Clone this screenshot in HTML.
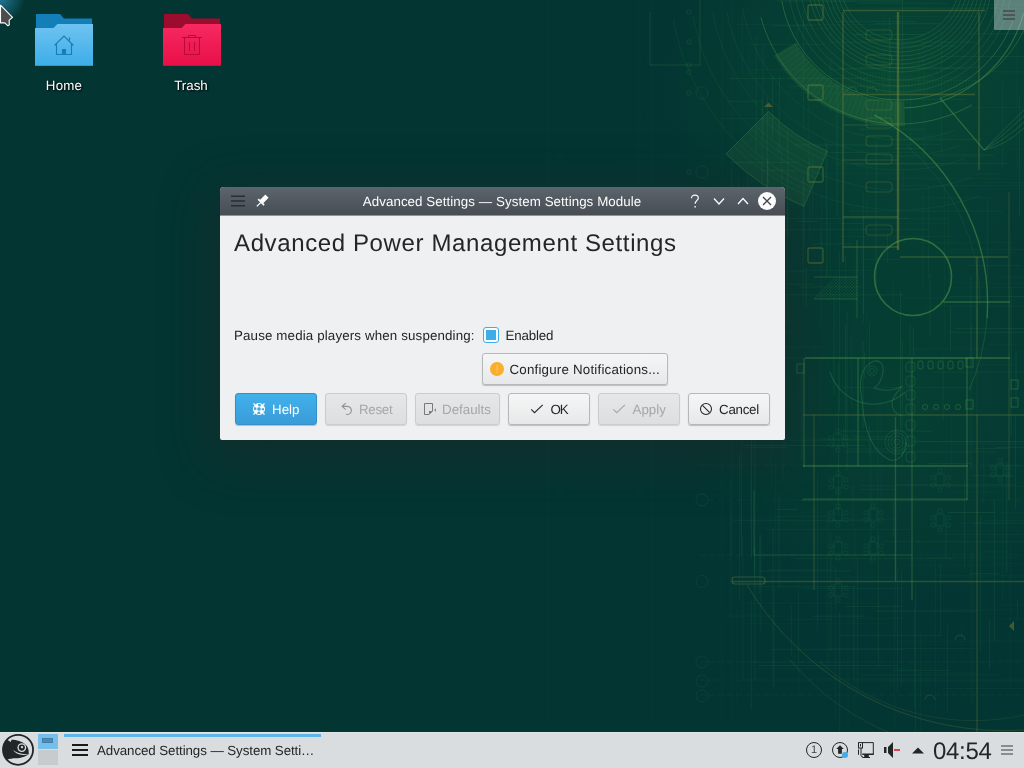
<!DOCTYPE html>
<html lang="en">
<head>
<meta charset="utf-8">
<title>Advanced Settings — System Settings Module</title>
<style>
*{box-sizing:border-box;margin:0;padding:0}
html,body{width:1024px;height:768px;overflow:hidden;background:#033434}
body{position:relative;text-rendering:geometricPrecision;font-family:"Liberation Sans",sans-serif;font-size:13.33px;color:#232627;cursor:default}
.abs{position:absolute}
#wall{position:absolute;left:0;top:0;width:1024px;height:768px}
.dlabel{will-change:transform;position:absolute;color:#fff;font-size:13.33px;line-height:16px;text-align:center;white-space:nowrap;text-shadow:1px 1px 2px rgba(0,0,0,.9),0 0 2px rgba(0,0,0,.6)}
/* window */
#win{will-change:transform;position:absolute;left:220px;top:187px;width:565px;height:253px;border-radius:4px 4px 2px 2px;background:#eff0f1;box-shadow:0 12px 50px 10px rgba(35,38,41,.4)}
#tbar{position:absolute;left:0;top:0;width:565px;height:28px;border-radius:4px 4px 0 0;background:linear-gradient(#5c646c,#474d54)}
#tline{position:absolute;left:0;top:28px;width:565px;height:1px;background:#3daee9}
#ttext{position:absolute;left:0;top:7px;width:564px;text-align:center;color:#fcfcfc;line-height:16px;white-space:nowrap;letter-spacing:.07px}
h1{position:absolute;left:14px;top:42px;font-size:24px;line-height:30px;font-weight:normal;white-space:nowrap;letter-spacing:.62px;color:#232627}
.lbl{position:absolute;line-height:16px;white-space:nowrap}
.btn{position:absolute;height:32px;border:1px solid #b6b8ba;border-radius:3px;background:linear-gradient(#f5f6f6,#e7e8e9);box-shadow:0 1px 1px rgba(0,0,0,.22);white-space:nowrap}
.btn span{position:absolute;top:8px;line-height:16px}
.btn svg{position:absolute;top:7px}
.btn.dis{background:linear-gradient(#e6e7e8,#dddedf);border-color:#cacccd;color:#a5a7a8;box-shadow:0 1px 1px rgba(0,0,0,.12)}
.btn.def{background:linear-gradient(#41b1ec,#3a9cd8);border-color:#3490c9;color:#fff}
/* panel */
#panel{will-change:transform;position:absolute;left:0;top:732px;width:1024px;height:36px;background:#d9dddf;border-top:1px solid #e3e6e7}
</style>
</head>
<body>
<svg id="wall" viewBox="0 0 1024 768">
<defs>
<radialGradient id="g1" cx="900" cy="90" r="300" gradientUnits="userSpaceOnUse"><stop offset="0" stop-color="#0d5834" stop-opacity=".55"/><stop offset=".5" stop-color="#094a35" stop-opacity=".34"/><stop offset="1" stop-color="#033532" stop-opacity="0"/></radialGradient>
<radialGradient id="g2" cx="905" cy="400" r="260" gradientUnits="userSpaceOnUse"><stop offset="0" stop-color="#0b4c34" stop-opacity=".45"/><stop offset=".6" stop-color="#084434" stop-opacity=".25"/><stop offset="1" stop-color="#033532" stop-opacity="0"/></radialGradient>
<radialGradient id="g0" cx="0" cy="-2" r="25" gradientUnits="userSpaceOnUse"><stop offset="0" stop-color="#23789a"/><stop offset="1" stop-color="#23789a" stop-opacity="0"/></radialGradient>
<clipPath id="cw"><rect x="0" y="0" width="1024" height="732"/></clipPath>
</defs>
<rect width="1024" height="768" fill="#033532"/>
<rect width="1024" height="768" fill="url(#g1)"/>
<rect width="1024" height="768" fill="url(#g2)"/>
<rect width="40" height="40" fill="url(#g0)"/>
<g clip-path="url(#cw)" fill="none">
<path d="M904.7 113.9A134 134 0 0 1 785.1 49" stroke="#5aa84e" stroke-opacity="0.17" stroke-width="25"/>
<path d="M960 -20A60 60 0 0 1 840 -20" stroke="#5aa84e" stroke-opacity="0.3" stroke-width="0.7"/>
<path d="M964 -20A64 64 0 0 1 836 -20" stroke="#5aa84e" stroke-opacity="0.3" stroke-width="0.7"/>
<path d="M968 -20A68 68 0 0 1 832 -20" stroke="#5aa84e" stroke-opacity="0.3" stroke-width="0.7"/>
<path d="M972 -20A72 72 0 0 1 828 -20" stroke="#5aa84e" stroke-opacity="0.3" stroke-width="0.7"/>
<path d="M976 -20A76 76 0 0 1 824 -20" stroke="#5aa84e" stroke-opacity="0.3" stroke-width="0.7"/>
<path d="M980 -20A80 80 0 0 1 820 -20" stroke="#5aa84e" stroke-opacity="0.3" stroke-width="0.7"/>
<path d="M984 -20A84 84 0 0 1 816 -20" stroke="#5aa84e" stroke-opacity="0.3" stroke-width="0.7"/>
<path d="M988 -20A88 88 0 0 1 812 -20" stroke="#5aa84e" stroke-opacity="0.3" stroke-width="0.7"/>
<path d="M992 -20A92 92 0 0 1 808 -20" stroke="#5aa84e" stroke-opacity="0.3" stroke-width="0.7"/>
<path d="M998.5 -2.6A100 100 0 0 1 800.4 -11.3" stroke="#5aa84e" stroke-opacity="0.22" stroke-width="0.8"/>
<path d="M1004.4 -1.6A106 106 0 0 1 794.4 -10.8" stroke="#5aa84e" stroke-opacity="0.22" stroke-width="0.8"/>
<path d="M1010.3 -0.6A112 112 0 0 1 788.4 -10.2" stroke="#5aa84e" stroke-opacity="0.22" stroke-width="0.8"/>
<path d="M1012.8 21A120 120 0 0 1 781.8 0.8" stroke="#5aa84e" stroke-opacity="0.35" stroke-width="1"/>
<path d="M972 104.7A144 144 0 0 1 760.9 17.3" stroke="#5aa84e" stroke-opacity="0.35" stroke-width="1"/>
<path d="M1023.6 13.1A128 128 0 0 1 904.5 107.9" stroke="#5aa84e" stroke-opacity="0.42" stroke-width="1.2"/>
<path d="M954.7 130.4A160 160 0 0 1 742.4 7.8" stroke="#3a9458" stroke-opacity="0.13" stroke-width="0.9"/>
<path d="M960.2 145.4A176 176 0 0 1 726.7 10.6" stroke="#3a9458" stroke-opacity="0.13" stroke-width="0.9"/>
<path d="M965 158.5A190 190 0 0 1 712.9 13" stroke="#3a9458" stroke-opacity="0.13" stroke-width="0.9"/>
<path d="M971.8 177.3A210 210 0 0 1 693.2 16.5" stroke="#3a9458" stroke-opacity="0.13" stroke-width="0.9"/>
<path d="M978.7 196.1A230 230 0 0 1 673.5 19.9" stroke="#3a9458" stroke-opacity="0.13" stroke-width="0.9"/>
<path d="M900 101L900 123" stroke="#5aa84e" stroke-opacity=".16" stroke-width=".6"/>
<path d="M895.8 100.9L895 122.9" stroke="#5aa84e" stroke-opacity=".16" stroke-width=".6"/>
<path d="M891.6 100.7L890 122.7" stroke="#5aa84e" stroke-opacity=".16" stroke-width=".6"/>
<path d="M887.4 100.3L885.1 122.2" stroke="#5aa84e" stroke-opacity=".16" stroke-width=".6"/>
<path d="M883.2 99.8L880.1 121.6" stroke="#5aa84e" stroke-opacity=".16" stroke-width=".6"/>
<path d="M879 99.2L875.2 120.8" stroke="#5aa84e" stroke-opacity=".16" stroke-width=".6"/>
<path d="M874.8 98.4L870.3 119.9" stroke="#5aa84e" stroke-opacity=".16" stroke-width=".6"/>
<path d="M870.7 97.4L865.4 118.8" stroke="#5aa84e" stroke-opacity=".16" stroke-width=".6"/>
<path d="M866.6 96.3L860.6 117.5" stroke="#5aa84e" stroke-opacity=".16" stroke-width=".6"/>
<path d="M862.6 95.1L855.8 116" stroke="#5aa84e" stroke-opacity=".16" stroke-width=".6"/>
<path d="M858.6 93.7L851.1 114.4" stroke="#5aa84e" stroke-opacity=".16" stroke-width=".6"/>
<path d="M854.7 92.2L846.4 112.6" stroke="#5aa84e" stroke-opacity=".16" stroke-width=".6"/>
<path d="M850.8 90.5L841.8 110.6" stroke="#5aa84e" stroke-opacity=".16" stroke-width=".6"/>
<path d="M847 88.8L837.3 108.5" stroke="#5aa84e" stroke-opacity=".16" stroke-width=".6"/>
<path d="M843.2 86.8L832.9 106.3" stroke="#5aa84e" stroke-opacity=".16" stroke-width=".6"/>
<path d="M839.5 84.8L828.5 103.8" stroke="#5aa84e" stroke-opacity=".16" stroke-width=".6"/>
<path d="M835.9 82.6L824.2 101.3" stroke="#5aa84e" stroke-opacity=".16" stroke-width=".6"/>
<path d="M832.3 80.3L820 98.6" stroke="#5aa84e" stroke-opacity=".16" stroke-width=".6"/>
<path d="M828.9 77.9L815.9 95.7" stroke="#5aa84e" stroke-opacity=".16" stroke-width=".6"/>
<path d="M825.5 75.3L812 92.7" stroke="#5aa84e" stroke-opacity=".16" stroke-width=".6"/>
<path d="M822.2 72.7L808.1 89.5" stroke="#5aa84e" stroke-opacity=".16" stroke-width=".6"/>
<path d="M819 69.9L804.3 86.3" stroke="#5aa84e" stroke-opacity=".16" stroke-width=".6"/>
<path d="M815.9 67L800.7 82.9" stroke="#5aa84e" stroke-opacity=".16" stroke-width=".6"/>
<path d="M813 64.1L797.1 79.3" stroke="#5aa84e" stroke-opacity=".16" stroke-width=".6"/>
<path d="M810.1 61L793.7 75.7" stroke="#5aa84e" stroke-opacity=".16" stroke-width=".6"/>
<path d="M807.3 57.8L790.5 71.9" stroke="#5aa84e" stroke-opacity=".16" stroke-width=".6"/>
<path d="M804.7 54.5L787.3 68" stroke="#5aa84e" stroke-opacity=".16" stroke-width=".6"/>
<path d="M802.1 51.1L784.3 64.1" stroke="#5aa84e" stroke-opacity=".16" stroke-width=".6"/>
<path d="M799.7 47.7L781.4 60" stroke="#5aa84e" stroke-opacity=".16" stroke-width=".6"/>
<path d="M797.4 44.1L778.7 55.8" stroke="#5aa84e" stroke-opacity=".16" stroke-width=".6"/>
<path d="M874.2 114.9A213.5 213.5 0 0 1 987 318.3" stroke="#5aa84e" stroke-opacity="0.45" stroke-width="1.4"/>
<path d="M987 318.3A213.5 213.5 0 0 1 969 390.2" stroke="#5aa84e" stroke-opacity="0.2" stroke-width="1.1"/>
<path d="M906.4 145.6A206 206 0 0 1 980 303.4" stroke="#5aa84e" stroke-opacity="0.14" stroke-width="0.8"/>
<path d="M940 98L984 150" stroke="#5aa84e" stroke-opacity=".4" stroke-width="1.2"/>
<path d="M984 150Q1005 128 1024 110" stroke="#5aa84e" stroke-opacity=".3" stroke-width=".8"/>
<path d="M984 150Q1005 134 1024 116" stroke="#5aa84e" stroke-opacity=".3" stroke-width=".8"/>
<path d="M984 150Q1005 140 1024 122" stroke="#5aa84e" stroke-opacity=".3" stroke-width=".8"/>
<path d="M984 150Q1005 146 1024 128" stroke="#5aa84e" stroke-opacity=".3" stroke-width=".8"/>
<path d="M1024 30Q1000 80 940 98" stroke="#5aa84e" stroke-opacity=".3" stroke-width="1"/>
<circle cx="913" cy="277" r="38.500" stroke="#5aa84e" stroke-opacity=".48" stroke-width="1.600"/>
<path d="M830 372A46 46 0 0 0 905 392" stroke="#3a9458" stroke-opacity=".3" stroke-width="1.200"/>
<path d="M747 585A300 300 0 0 0 1024 730" stroke="#7a853a" stroke-opacity=".28" stroke-width="1"/>
<path d="M790 660A260 260 0 0 0 1024 750" stroke="#7a853a" stroke-opacity=".18" stroke-width="1"/>
<path d="M820 662A230 230 0 0 0 1024 715" stroke="#7a853a" stroke-opacity=".16" stroke-width="1"/>
<path d="M898 12L898 250" stroke="#7a853a" stroke-opacity="0.5" stroke-width="2.4"/>
<path d="M843 12L843 262" stroke="#7a853a" stroke-opacity="0.4" stroke-width="1.4"/>
<path d="M979 12L979 170" stroke="#7a853a" stroke-opacity="0.4" stroke-width="1.4"/>
<path d="M843 10.5L985 10.5" stroke="#7a853a" stroke-opacity="0.4" stroke-width="1.4"/>
<path d="M843 94.5L975 94.5" stroke="#7a853a" stroke-opacity="0.4" stroke-width="1.4"/>
<path d="M843 217L898 217" stroke="#7a853a" stroke-opacity="0.38" stroke-width="1.4"/>
<path d="M843 247L898 247" stroke="#7a853a" stroke-opacity="0.38" stroke-width="1.4"/>
<path d="M900 257L1008 257" stroke="#7a853a" stroke-opacity="0.38" stroke-width="1.4"/>
<path d="M977 257L977 358" stroke="#7a853a" stroke-opacity="0.38" stroke-width="1.4"/>
<path d="M1009 192L1009 500" stroke="#7a853a" stroke-opacity="0.3" stroke-width="1"/>
<path d="M803 415L1024 415" stroke="#7a853a" stroke-opacity="0.34" stroke-width="1.4"/>
<path d="M895.5 417L895.5 581" stroke="#7a853a" stroke-opacity="0.36" stroke-width="1.4"/>
<path d="M977 415L977 732" stroke="#7a853a" stroke-opacity="0.32" stroke-width="1.2"/>
<path d="M814 415L814 590" stroke="#7a853a" stroke-opacity="0.32" stroke-width="1.2"/>
<path d="M732 581.5L1024 581.5" stroke="#7a853a" stroke-opacity="0.34" stroke-width="1.4"/>
<path d="M843 160L898 160" stroke="#7a853a" stroke-opacity="0.3" stroke-width="1"/>
<path d="M843 125L898 125" stroke="#7a853a" stroke-opacity="0.3" stroke-width="1"/>
<path d="M805 358L1010 358" stroke="#5aa84e" stroke-opacity="0.45" stroke-width="1.6"/>
<path d="M803 466L968 466" stroke="#5aa84e" stroke-opacity="0.42" stroke-width="1.6"/>
<path d="M803 499L968 499" stroke="#5aa84e" stroke-opacity="0.3" stroke-width="1.2"/>
<path d="M804 358L804 467" stroke="#5aa84e" stroke-opacity="0.36" stroke-width="1.2"/>
<path d="M858 358L858 466" stroke="#5aa84e" stroke-opacity="0.36" stroke-width="1.2"/>
<path d="M912 358L912 600" stroke="#5aa84e" stroke-opacity="0.32" stroke-width="1.2"/>
<path d="M967 358L967 500" stroke="#5aa84e" stroke-opacity="0.36" stroke-width="1.2"/>
<path d="M857 240L857 318" stroke="#5aa84e" stroke-opacity="0.3" stroke-width="1"/>
<path d="M943 302L1010 302" stroke="#5aa84e" stroke-opacity="0.38" stroke-width="1.4"/>
<path d="M814 277L857 277" stroke="#5aa84e" stroke-opacity="0.3" stroke-width="1"/>
<path d="M814 299L857 299" stroke="#5aa84e" stroke-opacity="0.3" stroke-width="1"/>
<path d="M754 555L912 555" stroke="#5aa84e" stroke-opacity="0.24" stroke-width="1"/>
<path d="M754 490L754 555" stroke="#5aa84e" stroke-opacity="0.24" stroke-width="1"/>
<path d="M802 500L967 500" stroke="#5aa84e" stroke-opacity="0.24" stroke-width="1"/>
<path d="M650 12L650 65" stroke="#5aa84e" stroke-opacity="0.2" stroke-width="0.9"/>
<path d="M650 65L700 65" stroke="#5aa84e" stroke-opacity="0.2" stroke-width="0.9"/>
<path d="M700 0L700 65" stroke="#5aa84e" stroke-opacity="0.2" stroke-width="0.9"/>
<rect x="808" y="5" width="15" height="15" rx="1.500" stroke="#7a853a" stroke-opacity=".45" stroke-width="1.300"/>
<rect x="808" y="85" width="15" height="15" rx="1.500" stroke="#7a853a" stroke-opacity=".45" stroke-width="1.300"/>
<rect x="808" y="167" width="15" height="15" rx="1.500" stroke="#7a853a" stroke-opacity=".45" stroke-width="1.300"/>
<rect x="808" y="248" width="15" height="15" rx="1.500" stroke="#7a853a" stroke-opacity=".45" stroke-width="1.300"/>
<rect x="866" y="30" width="26" height="10" rx="3" stroke="#7a853a" stroke-opacity=".3" stroke-width="1"/>
<rect x="866" y="55" width="26" height="10" rx="3" stroke="#7a853a" stroke-opacity=".3" stroke-width="1"/>
<rect x="866" y="100" width="26" height="10" rx="3" stroke="#7a853a" stroke-opacity=".3" stroke-width="1"/>
<rect x="866" y="118" width="26" height="10" rx="3" stroke="#7a853a" stroke-opacity=".3" stroke-width="1"/>
<rect x="866" y="136" width="26" height="10" rx="3" stroke="#7a853a" stroke-opacity=".3" stroke-width="1"/>
<rect x="866" y="154" width="26" height="10" rx="3" stroke="#7a853a" stroke-opacity=".3" stroke-width="1"/>
<rect x="866" y="182" width="26" height="10" rx="3" stroke="#7a853a" stroke-opacity=".3" stroke-width="1"/>
<rect x="866" y="225" width="26" height="10" rx="3" stroke="#7a853a" stroke-opacity=".3" stroke-width="1"/>
<circle cx="689" cy="12" r="2.200" stroke="#3a9458" stroke-opacity=".22" stroke-width=".8"/>
<circle cx="689" cy="42" r="2.200" stroke="#3a9458" stroke-opacity=".22" stroke-width=".8"/>
<circle cx="689" cy="65" r="2.200" stroke="#3a9458" stroke-opacity=".22" stroke-width=".8"/>
<circle cx="689" cy="72" r="2.200" stroke="#3a9458" stroke-opacity=".22" stroke-width=".8"/>
<circle cx="689" cy="93" r="2.200" stroke="#3a9458" stroke-opacity=".22" stroke-width=".8"/>
<circle cx="689" cy="172" r="2.200" stroke="#3a9458" stroke-opacity=".22" stroke-width=".8"/>
<circle cx="702" cy="93" r="6" stroke="#3a9458" stroke-opacity=".18" stroke-width=".8"/>
<circle cx="702" cy="172" r="6" stroke="#3a9458" stroke-opacity=".18" stroke-width=".8"/>
<circle cx="702" cy="255" r="6" stroke="#3a9458" stroke-opacity=".18" stroke-width=".8"/>
<circle cx="702" cy="500" r="6" stroke="#3a9458" stroke-opacity=".18" stroke-width=".8"/>
<circle cx="702" cy="581.5" r="6" stroke="#3a9458" stroke-opacity=".18" stroke-width=".8"/>
<circle cx="702" cy="662" r="6" stroke="#3a9458" stroke-opacity=".18" stroke-width=".8"/>
<circle cx="702" cy="681" r="6" stroke="#3a9458" stroke-opacity=".18" stroke-width=".8"/>
<circle cx="702" cy="696" r="6" stroke="#3a9458" stroke-opacity=".18" stroke-width=".8"/>
<path d="M814 299L836 277" stroke="#5aa84e" stroke-opacity=".22" stroke-width=".7"/>
<path d="M817 299L839 277" stroke="#5aa84e" stroke-opacity=".22" stroke-width=".7"/>
<path d="M820 299L842 277" stroke="#5aa84e" stroke-opacity=".22" stroke-width=".7"/>
<path d="M823 299L845 277" stroke="#5aa84e" stroke-opacity=".22" stroke-width=".7"/>
<path d="M826 299L848 277" stroke="#5aa84e" stroke-opacity=".22" stroke-width=".7"/>
<path d="M829 299L851 277" stroke="#5aa84e" stroke-opacity=".22" stroke-width=".7"/>
<path d="M832 299L854 277" stroke="#5aa84e" stroke-opacity=".22" stroke-width=".7"/>
<path d="M835 299L857 277" stroke="#5aa84e" stroke-opacity=".22" stroke-width=".7"/>
<path d="M838 299L857 280" stroke="#5aa84e" stroke-opacity=".22" stroke-width=".7"/>
<path d="M841 299L857 283" stroke="#5aa84e" stroke-opacity=".22" stroke-width=".7"/>
<path d="M844 299L857 286" stroke="#5aa84e" stroke-opacity=".22" stroke-width=".7"/>
<path d="M847 299L857 289" stroke="#5aa84e" stroke-opacity=".22" stroke-width=".7"/>
<path d="M850 299L857 292" stroke="#5aa84e" stroke-opacity=".22" stroke-width=".7"/>
<path d="M853 299L857 295" stroke="#5aa84e" stroke-opacity=".22" stroke-width=".7"/>
<path d="M856 299L857 298" stroke="#5aa84e" stroke-opacity=".22" stroke-width=".7"/>
<path d="M825.2 96.5v111.1" stroke="#3a9458" stroke-opacity="0.08" stroke-width=".8"/>
<path d="M887.5 234v28.1" stroke="#3a9458" stroke-opacity="0.14" stroke-width=".8"/>
<path d="M741 277.5v29.8" stroke="#3a9458" stroke-opacity="0.08" stroke-width=".8"/>
<path d="M854.8 529.2v37.3" stroke="#3a9458" stroke-opacity="0.10" stroke-width=".8"/>
<path d="M914.5 606.5v100.8" stroke="#3a9458" stroke-opacity="0.12" stroke-width=".8"/>
<path d="M1017 29.8v140.2" stroke="#3a9458" stroke-opacity="0.11" stroke-width=".8"/>
<path d="M772.4 75.4v63.2" stroke="#3a9458" stroke-opacity="0.18" stroke-width=".8"/>
<path d="M783.1 372.2v109.4" stroke="#3a9458" stroke-opacity="0.12" stroke-width=".8"/>
<path d="M891 40.2v28.3" stroke="#3a9458" stroke-opacity="0.10" stroke-width=".8"/>
<path d="M930 273.7v64" stroke="#3a9458" stroke-opacity="0.15" stroke-width=".8"/>
<path d="M863.2 191.9v131.2" stroke="#3a9458" stroke-opacity="0.16" stroke-width=".8"/>
<path d="M801.8 367.6v93.5" stroke="#3a9458" stroke-opacity="0.18" stroke-width=".8"/>
<path d="M944.5 184.3v157.2" stroke="#3a9458" stroke-opacity="0.09" stroke-width=".8"/>
<path d="M852.9 484.6v41.3" stroke="#3a9458" stroke-opacity="0.13" stroke-width=".8"/>
<path d="M741.5 427.7v127" stroke="#3a9458" stroke-opacity="0.14" stroke-width=".8"/>
<path d="M987.4 200.8v117.3" stroke="#3a9458" stroke-opacity="0.15" stroke-width=".8"/>
<path d="M900.5 292v137.6" stroke="#3a9458" stroke-opacity="0.19" stroke-width=".8"/>
<path d="M869.4 425.1v28.5" stroke="#3a9458" stroke-opacity="0.16" stroke-width=".8"/>
<path d="M920.3 635.6v135.1" stroke="#3a9458" stroke-opacity="0.11" stroke-width=".8"/>
<path d="M843.4 427.9v23.2" stroke="#3a9458" stroke-opacity="0.13" stroke-width=".8"/>
<path d="M779.4 74.9v28.3" stroke="#3a9458" stroke-opacity="0.17" stroke-width=".8"/>
<path d="M768 158.5v74.7" stroke="#3a9458" stroke-opacity="0.18" stroke-width=".8"/>
<path d="M753.7 287.5v96.9" stroke="#3a9458" stroke-opacity="0.18" stroke-width=".8"/>
<path d="M970.9 553v59" stroke="#3a9458" stroke-opacity="0.12" stroke-width=".8"/>
<path d="M835.5 565.9v154.1" stroke="#3a9458" stroke-opacity="0.09" stroke-width=".8"/>
<path d="M781.8 148.5v52.7" stroke="#3a9458" stroke-opacity="0.13" stroke-width=".8"/>
<path d="M903.2 168.2v20.6" stroke="#3a9458" stroke-opacity="0.12" stroke-width=".8"/>
<path d="M838.6 362.5v153.4" stroke="#3a9458" stroke-opacity="0.16" stroke-width=".8"/>
<path d="M881.6 395.3v114.7" stroke="#3a9458" stroke-opacity="0.08" stroke-width=".8"/>
<path d="M994.5 499.2v142.4" stroke="#3a9458" stroke-opacity="0.17" stroke-width=".8"/>
<path d="M845.4 255.3v34.5" stroke="#3a9458" stroke-opacity="0.15" stroke-width=".8"/>
<path d="M748.3 43.1v49.2" stroke="#3a9458" stroke-opacity="0.09" stroke-width=".8"/>
<path d="M830 33.6v20" stroke="#3a9458" stroke-opacity="0.09" stroke-width=".8"/>
<path d="M759.8 232.7v23.6" stroke="#3a9458" stroke-opacity="0.18" stroke-width=".8"/>
<path d="M910.5 95.1v55.3" stroke="#3a9458" stroke-opacity="0.12" stroke-width=".8"/>
<path d="M837.1 78.6v138.9" stroke="#3a9458" stroke-opacity="0.20" stroke-width=".8"/>
<path d="M867 309.7v32" stroke="#3a9458" stroke-opacity="0.08" stroke-width=".8"/>
<path d="M830.7 169.4v136" stroke="#3a9458" stroke-opacity="0.09" stroke-width=".8"/>
<path d="M736.8 608.6v94" stroke="#3a9458" stroke-opacity="0.09" stroke-width=".8"/>
<path d="M889.7 17.3v93.9" stroke="#3a9458" stroke-opacity="0.20" stroke-width=".8"/>
<path d="M983.8 445.6v56.6" stroke="#3a9458" stroke-opacity="0.12" stroke-width=".8"/>
<path d="M779.1 494v94.6" stroke="#3a9458" stroke-opacity="0.17" stroke-width=".8"/>
<path d="M826.9 142.7v133.6" stroke="#3a9458" stroke-opacity="0.20" stroke-width=".8"/>
<path d="M980.7 515.9v134.6" stroke="#3a9458" stroke-opacity="0.17" stroke-width=".8"/>
<path d="M796.7 331.3v69.8" stroke="#3a9458" stroke-opacity="0.07" stroke-width=".8"/>
<path d="M738.2 178.8v56.3" stroke="#3a9458" stroke-opacity="0.16" stroke-width=".8"/>
<path d="M1011.2 286.2v151.2" stroke="#3a9458" stroke-opacity="0.20" stroke-width=".8"/>
<path d="M1010.8 233.4v50.9" stroke="#3a9458" stroke-opacity="0.10" stroke-width=".8"/>
<path d="M787.8 130.8v107.4" stroke="#3a9458" stroke-opacity="0.19" stroke-width=".8"/>
<path d="M977.1 306.9v111.4" stroke="#3a9458" stroke-opacity="0.17" stroke-width=".8"/>
<path d="M754.9 422.8v147.4" stroke="#3a9458" stroke-opacity="0.17" stroke-width=".8"/>
<path d="M950.5 305.9v45" stroke="#3a9458" stroke-opacity="0.17" stroke-width=".8"/>
<path d="M827.8 512.5v156" stroke="#3a9458" stroke-opacity="0.12" stroke-width=".8"/>
<path d="M848 606v121.5" stroke="#3a9458" stroke-opacity="0.09" stroke-width=".8"/>
<path d="M767.3 96.7v146.7" stroke="#3a9458" stroke-opacity="0.17" stroke-width=".8"/>
<path d="M773 529v157.2" stroke="#3a9458" stroke-opacity="0.16" stroke-width=".8"/>
<path d="M833 351.1v38.3" stroke="#3a9458" stroke-opacity="0.07" stroke-width=".8"/>
<path d="M1015.4 415.8v93.7" stroke="#3a9458" stroke-opacity="0.19" stroke-width=".8"/>
<path d="M857.5 557.9v135.7" stroke="#3a9458" stroke-opacity="0.10" stroke-width=".8"/>
<path d="M804 187.5v53.7" stroke="#3a9458" stroke-opacity="0.15" stroke-width=".8"/>
<path d="M806.3 268.2v38.4" stroke="#3a9458" stroke-opacity="0.19" stroke-width=".8"/>
<path d="M834 293.2v101.7" stroke="#3a9458" stroke-opacity="0.19" stroke-width=".8"/>
<path d="M853.7 587.3v90.2" stroke="#3a9458" stroke-opacity="0.14" stroke-width=".8"/>
<path d="M883.9 12v81.6" stroke="#3a9458" stroke-opacity="0.09" stroke-width=".8"/>
<path d="M731.2 511.5v44.1" stroke="#3a9458" stroke-opacity="0.13" stroke-width=".8"/>
<path d="M943.2 356.1v65.6" stroke="#3a9458" stroke-opacity="0.14" stroke-width=".8"/>
<path d="M893.3 501.9v34.9" stroke="#3a9458" stroke-opacity="0.14" stroke-width=".8"/>
<path d="M803.1 177.2v128.1" stroke="#3a9458" stroke-opacity="0.14" stroke-width=".8"/>
<path d="M895.1 486.4v147.7" stroke="#3a9458" stroke-opacity="0.13" stroke-width=".8"/>
<path d="M910.1 323.6v91.7" stroke="#3a9458" stroke-opacity="0.16" stroke-width=".8"/>
<path d="M863 341.3v86.9" stroke="#3a9458" stroke-opacity="0.19" stroke-width=".8"/>
<path d="M935.6 561v151.9" stroke="#3a9458" stroke-opacity="0.10" stroke-width=".8"/>
<path d="M894.5 603.7v137.6" stroke="#3a9458" stroke-opacity="0.09" stroke-width=".8"/>
<path d="M765.8 283v30.2" stroke="#3a9458" stroke-opacity="0.10" stroke-width=".8"/>
<path d="M751.5 428.5v129.8" stroke="#3a9458" stroke-opacity="0.19" stroke-width=".8"/>
<path d="M775.4 458.3v112.4" stroke="#3a9458" stroke-opacity="0.09" stroke-width=".8"/>
<path d="M989.6 619.2v50.7" stroke="#3a9458" stroke-opacity="0.19" stroke-width=".8"/>
<path d="M847.1 311.8v158.6" stroke="#3a9458" stroke-opacity="0.18" stroke-width=".8"/>
<path d="M777.5 276.2v92.2" stroke="#3a9458" stroke-opacity="0.11" stroke-width=".8"/>
<path d="M787.5 203.9v121.1" stroke="#3a9458" stroke-opacity="0.07" stroke-width=".8"/>
<path d="M892.9 281.9v22.5" stroke="#3a9458" stroke-opacity="0.11" stroke-width=".8"/>
<path d="M913.4 327.8v29" stroke="#3a9458" stroke-opacity="0.20" stroke-width=".8"/>
<path d="M961.8 621.9v34.7" stroke="#3a9458" stroke-opacity="0.10" stroke-width=".8"/>
<path d="M741.6 498.6v57.9" stroke="#3a9458" stroke-opacity="0.09" stroke-width=".8"/>
<path d="M854.1 583.3v134.7" stroke="#3a9458" stroke-opacity="0.10" stroke-width=".8"/>
<path d="M773.9 588.3v99.9" stroke="#3a9458" stroke-opacity="0.16" stroke-width=".8"/>
<path d="M756.3 36.8v116.3" stroke="#3a9458" stroke-opacity="0.13" stroke-width=".8"/>
<path d="M751.3 600.5v108.8" stroke="#3a9458" stroke-opacity="0.17" stroke-width=".8"/>
<path d="M754.6 548v29.3" stroke="#3a9458" stroke-opacity="0.18" stroke-width=".8"/>
<path d="M863.4 217.1v97.4" stroke="#3a9458" stroke-opacity="0.19" stroke-width=".8"/>
<path d="M808.8 82.7v93.8" stroke="#3a9458" stroke-opacity="0.10" stroke-width=".8"/>
<path d="M762.2 103.3v27.1" stroke="#3a9458" stroke-opacity="0.10" stroke-width=".8"/>
<path d="M821.7 195.2v126.3" stroke="#3a9458" stroke-opacity="0.11" stroke-width=".8"/>
<path d="M877 113.9v68.6" stroke="#3a9458" stroke-opacity="0.07" stroke-width=".8"/>
<path d="M803.6 9.8v122.6" stroke="#3a9458" stroke-opacity="0.14" stroke-width=".8"/>
<path d="M785.7 303.8v150.8" stroke="#3a9458" stroke-opacity="0.08" stroke-width=".8"/>
<path d="M970.8 276.6v89.3" stroke="#3a9458" stroke-opacity="0.18" stroke-width=".8"/>
<path d="M845.6 324.3v116.3" stroke="#3a9458" stroke-opacity="0.20" stroke-width=".8"/>
<path d="M830.8 532.7v118.9" stroke="#3a9458" stroke-opacity="0.15" stroke-width=".8"/>
<path d="M849 222.4v27.6" stroke="#3a9458" stroke-opacity="0.09" stroke-width=".8"/>
<path d="M750.8 474.2v55.8" stroke="#3a9458" stroke-opacity="0.09" stroke-width=".8"/>
<path d="M754.8 538.4v141.9" stroke="#3a9458" stroke-opacity="0.16" stroke-width=".8"/>
<path d="M812.9 155v61" stroke="#3a9458" stroke-opacity="0.13" stroke-width=".8"/>
<path d="M776.3 285.3v56.9" stroke="#3a9458" stroke-opacity="0.20" stroke-width=".8"/>
<path d="M1016 350.1v54.2" stroke="#3a9458" stroke-opacity="0.20" stroke-width=".8"/>
<path d="M821 228.2v20.1" stroke="#3a9458" stroke-opacity="0.12" stroke-width=".8"/>
<path d="M869.5 321.8v48.1" stroke="#3a9458" stroke-opacity="0.14" stroke-width=".8"/>
<path d="M731.5 169.1v32.6" stroke="#3a9458" stroke-opacity="0.12" stroke-width=".8"/>
<path d="M742.3 14.4v62.6" stroke="#3a9458" stroke-opacity="0.10" stroke-width=".8"/>
<path d="M902.2 338.7v125.1" stroke="#3a9458" stroke-opacity="0.16" stroke-width=".8"/>
<path d="M940.5 562.6v74.5" stroke="#3a9458" stroke-opacity="0.11" stroke-width=".8"/>
<path d="M1019.5 95.7v121.4" stroke="#3a9458" stroke-opacity="0.15" stroke-width=".8"/>
<path d="M742.9 534.6v144.9" stroke="#3a9458" stroke-opacity="0.15" stroke-width=".8"/>
<path d="M945.8 519.8v39.5" stroke="#3a9458" stroke-opacity="0.14" stroke-width=".8"/>
<path d="M878.3 534.4v132.7" stroke="#3a9458" stroke-opacity="0.18" stroke-width=".8"/>
<path d="M901.7 571.4v115.6" stroke="#3a9458" stroke-opacity="0.16" stroke-width=".8"/>
<path d="M797.6 19.9v38.6" stroke="#3a9458" stroke-opacity="0.12" stroke-width=".8"/>
<path d="M760.8 534.9v98.2" stroke="#3a9458" stroke-opacity="0.15" stroke-width=".8"/>
<path d="M914.1 435.6v88.5" stroke="#3a9458" stroke-opacity="0.07" stroke-width=".8"/>
<path d="M964.5 478.9v90.4" stroke="#3a9458" stroke-opacity="0.14" stroke-width=".8"/>
<path d="M923.8 42.3v123.2" stroke="#3a9458" stroke-opacity="0.10" stroke-width=".8"/>
<path d="M751.9 170v122.1" stroke="#3a9458" stroke-opacity="0.10" stroke-width=".8"/>
<path d="M947.5 624.5v89.2" stroke="#3a9458" stroke-opacity="0.12" stroke-width=".8"/>
<path d="M870.8 437.6v127.4" stroke="#3a9458" stroke-opacity="0.15" stroke-width=".8"/>
<path d="M919 49.6v40.6" stroke="#3a9458" stroke-opacity="0.10" stroke-width=".8"/>
<path d="M948.5 194.8v99.5" stroke="#3a9458" stroke-opacity="0.07" stroke-width=".8"/>
<path d="M747.8 172v114.1" stroke="#3a9458" stroke-opacity="0.16" stroke-width=".8"/>
<path d="M928.7 186.1v92.3" stroke="#3a9458" stroke-opacity="0.13" stroke-width=".8"/>
<path d="M867.1 75.8v145.1" stroke="#3a9458" stroke-opacity="0.10" stroke-width=".8"/>
<path d="M1017.6 599.2v22.5" stroke="#3a9458" stroke-opacity="0.13" stroke-width=".8"/>
<path d="M971 619.6v82.9" stroke="#3a9458" stroke-opacity="0.10" stroke-width=".8"/>
<path d="M791.7 605.2v49.5" stroke="#3a9458" stroke-opacity="0.15" stroke-width=".8"/>
<path d="M771.7 335.4v153.4" stroke="#3a9458" stroke-opacity="0.09" stroke-width=".8"/>
<path d="M971.1 325.6v144.2" stroke="#3a9458" stroke-opacity="0.16" stroke-width=".8"/>
<path d="M798 574.5v88.1" stroke="#3a9458" stroke-opacity="0.07" stroke-width=".8"/>
<path d="M731.1 314.7v83.1" stroke="#3a9458" stroke-opacity="0.11" stroke-width=".8"/>
<path d="M771.4 220.1v64.3" stroke="#3a9458" stroke-opacity="0.18" stroke-width=".8"/>
<path d="M730.5 480.5v137.5" stroke="#3a9458" stroke-opacity="0.09" stroke-width=".8"/>
<path d="M1002.4 456.3v146.2" stroke="#3a9458" stroke-opacity="0.11" stroke-width=".8"/>
<path d="M839.4 251.5v159.8" stroke="#3a9458" stroke-opacity="0.15" stroke-width=".8"/>
<path d="M836 274v58.5" stroke="#3a9458" stroke-opacity="0.08" stroke-width=".8"/>
<path d="M759.9 534.2v60" stroke="#3a9458" stroke-opacity="0.19" stroke-width=".8"/>
<path d="M803.3 170.1v91.5" stroke="#3a9458" stroke-opacity="0.09" stroke-width=".8"/>
<path d="M839.8 611.9v143.8" stroke="#3a9458" stroke-opacity="0.18" stroke-width=".8"/>
<path d="M915.5 584.6v151.7" stroke="#3a9458" stroke-opacity="0.14" stroke-width=".8"/>
<path d="M941.6 31.7v122.5" stroke="#3a9458" stroke-opacity="0.13" stroke-width=".8"/>
<path d="M951.3 412.5v60.1" stroke="#3a9458" stroke-opacity="0.08" stroke-width=".8"/>
<path d="M1002.5 81.5v86.1" stroke="#3a9458" stroke-opacity="0.11" stroke-width=".8"/>
<path d="M817.5 473v156.7" stroke="#3a9458" stroke-opacity="0.10" stroke-width=".8"/>
<path d="M922.9 192.5v98" stroke="#3a9458" stroke-opacity="0.12" stroke-width=".8"/>
<path d="M779.2 103.5v49.1" stroke="#3a9458" stroke-opacity="0.19" stroke-width=".8"/>
<path d="M876.1 140.8v146.9" stroke="#3a9458" stroke-opacity="0.20" stroke-width=".8"/>
<path d="M862.3 89.3v46.9" stroke="#3a9458" stroke-opacity="0.08" stroke-width=".8"/>
<path d="M830.5 58.3v53.5" stroke="#3a9458" stroke-opacity="0.10" stroke-width=".8"/>
<path d="M897.5 567.8v125" stroke="#3a9458" stroke-opacity="0.12" stroke-width=".8"/>
<path d="M851.7 335.5v72.8" stroke="#3a9458" stroke-opacity="0.11" stroke-width=".8"/>
<path d="M748.2 177.6v155.5" stroke="#3a9458" stroke-opacity="0.09" stroke-width=".8"/>
<path d="M878 403v140.8" stroke="#3a9458" stroke-opacity="0.10" stroke-width=".8"/>
<path d="M809.7 159v76" stroke="#3a9458" stroke-opacity="0.13" stroke-width=".8"/>
<path d="M1010.5 543.2v142.2" stroke="#3a9458" stroke-opacity="0.07" stroke-width=".8"/>
<path d="M739.5 454.1v145.4" stroke="#3a9458" stroke-opacity="0.13" stroke-width=".8"/>
<path d="M902.6 0.1v74.8" stroke="#3a9458" stroke-opacity="0.19" stroke-width=".8"/>
<path d="M972.7 547.5v156.1" stroke="#3a9458" stroke-opacity="0.10" stroke-width=".8"/>
<path d="M762.1 98.8v93.1" stroke="#3a9458" stroke-opacity="0.16" stroke-width=".8"/>
<path d="M1006.8 461.9v110.6" stroke="#3a9458" stroke-opacity="0.17" stroke-width=".8"/>
<path d="M864.5 353v25.5" stroke="#3a9458" stroke-opacity="0.17" stroke-width=".8"/>
<path d="M798.4 588.7v110.4" stroke="#3a9458" stroke-opacity="0.11" stroke-width=".8"/>
<path d="M767.6 161.1v109.1" stroke="#3a9458" stroke-opacity="0.16" stroke-width=".8"/>
<path d="M763 45v93.4" stroke="#3a9458" stroke-opacity="0.15" stroke-width=".8"/>
<path d="M844.1 143.1v104.1" stroke="#3a9458" stroke-opacity="0.07" stroke-width=".8"/>
<path d="M849 211.1h154.3" stroke="#3a9458" stroke-opacity="0.15" stroke-width=".8"/>
<path d="M853.1 618.6h52.9" stroke="#3a9458" stroke-opacity="0.10" stroke-width=".8"/>
<path d="M917.3 672.4h63" stroke="#3a9458" stroke-opacity="0.07" stroke-width=".8"/>
<path d="M908.8 348.8h78.8" stroke="#3a9458" stroke-opacity="0.10" stroke-width=".8"/>
<path d="M979 467.1h51.8" stroke="#3a9458" stroke-opacity="0.07" stroke-width=".8"/>
<path d="M837.8 236.6h115.6" stroke="#3a9458" stroke-opacity="0.10" stroke-width=".8"/>
<path d="M927 557.9h90.7" stroke="#3a9458" stroke-opacity="0.10" stroke-width=".8"/>
<path d="M807.3 678.9h134.8" stroke="#3a9458" stroke-opacity="0.10" stroke-width=".8"/>
<path d="M932.9 155h61.3" stroke="#3a9458" stroke-opacity="0.19" stroke-width=".8"/>
<path d="M772.4 347h51.3" stroke="#3a9458" stroke-opacity="0.12" stroke-width=".8"/>
<path d="M985.7 465.7h40.5" stroke="#3a9458" stroke-opacity="0.12" stroke-width=".8"/>
<path d="M992.8 149.1h39.9" stroke="#3a9458" stroke-opacity="0.08" stroke-width=".8"/>
<path d="M830.1 42.1h145.7" stroke="#3a9458" stroke-opacity="0.18" stroke-width=".8"/>
<path d="M999.3 512.9h150.4" stroke="#3a9458" stroke-opacity="0.11" stroke-width=".8"/>
<path d="M982 129.9h124.5" stroke="#3a9458" stroke-opacity="0.07" stroke-width=".8"/>
<path d="M826 465.1h72.3" stroke="#3a9458" stroke-opacity="0.11" stroke-width=".8"/>
<path d="M720.8 118.5h59.2" stroke="#3a9458" stroke-opacity="0.12" stroke-width=".8"/>
<path d="M754.6 668.9h155" stroke="#3a9458" stroke-opacity="0.10" stroke-width=".8"/>
<path d="M950 249.6h135.1" stroke="#3a9458" stroke-opacity="0.13" stroke-width=".8"/>
<path d="M852.6 34.5h72.2" stroke="#3a9458" stroke-opacity="0.19" stroke-width=".8"/>
<path d="M822 135.1h145.6" stroke="#3a9458" stroke-opacity="0.07" stroke-width=".8"/>
<path d="M947.3 287.6h127.3" stroke="#3a9458" stroke-opacity="0.08" stroke-width=".8"/>
<path d="M737.5 24.4h148.8" stroke="#3a9458" stroke-opacity="0.10" stroke-width=".8"/>
<path d="M971.6 523.1h67.5" stroke="#3a9458" stroke-opacity="0.11" stroke-width=".8"/>
<path d="M892.8 670.4h56.7" stroke="#3a9458" stroke-opacity="0.16" stroke-width=".8"/>
<path d="M797.2 221.5h20.5" stroke="#3a9458" stroke-opacity="0.17" stroke-width=".8"/>
<path d="M897.5 641.5h152.1" stroke="#3a9458" stroke-opacity="0.07" stroke-width=".8"/>
<path d="M853.1 163.7h153.9" stroke="#3a9458" stroke-opacity="0.19" stroke-width=".8"/>
<path d="M790.3 270.6h80.2" stroke="#3a9458" stroke-opacity="0.13" stroke-width=".8"/>
<path d="M771.2 649.7h132.4" stroke="#3a9458" stroke-opacity="0.17" stroke-width=".8"/>
<path d="M936.4 575.9h105" stroke="#3a9458" stroke-opacity="0.11" stroke-width=".8"/>
<path d="M821.3 223.7h129.5" stroke="#3a9458" stroke-opacity="0.08" stroke-width=".8"/>
<path d="M930.8 138.1h54.6" stroke="#3a9458" stroke-opacity="0.08" stroke-width=".8"/>
<path d="M874.7 23.7h65.6" stroke="#3a9458" stroke-opacity="0.20" stroke-width=".8"/>
<path d="M996.6 618.4h57.1" stroke="#3a9458" stroke-opacity="0.08" stroke-width=".8"/>
<path d="M859.6 67.5h119.4" stroke="#3a9458" stroke-opacity="0.13" stroke-width=".8"/>
<path d="M836.7 163.9h106.8" stroke="#3a9458" stroke-opacity="0.16" stroke-width=".8"/>
<path d="M957.2 523.6h113" stroke="#3a9458" stroke-opacity="0.09" stroke-width=".8"/>
<path d="M802.3 588.6h99.4" stroke="#3a9458" stroke-opacity="0.12" stroke-width=".8"/>
<path d="M775.8 516.6h54.6" stroke="#3a9458" stroke-opacity="0.10" stroke-width=".8"/>
<path d="M967.6 107.3h101" stroke="#3a9458" stroke-opacity="0.11" stroke-width=".8"/>
<path d="M997.9 277.2h91" stroke="#3a9458" stroke-opacity="0.10" stroke-width=".8"/>
<path d="M902.9 565.9h158.7" stroke="#3a9458" stroke-opacity="0.08" stroke-width=".8"/>
<path d="M949.3 332.3h137.7" stroke="#3a9458" stroke-opacity="0.19" stroke-width=".8"/>
<path d="M802.2 28.3h36.7" stroke="#3a9458" stroke-opacity="0.09" stroke-width=".8"/>
<path d="M883.3 681.1h150.2" stroke="#3a9458" stroke-opacity="0.12" stroke-width=".8"/>
<path d="M845.8 606.3h56.4" stroke="#3a9458" stroke-opacity="0.17" stroke-width=".8"/>
<path d="M749.6 662h103.5" stroke="#3a9458" stroke-opacity="0.15" stroke-width=".8"/>
<path d="M823.2 152.4h39.8" stroke="#3a9458" stroke-opacity="0.10" stroke-width=".8"/>
<path d="M887.8 178.4h111.2" stroke="#3a9458" stroke-opacity="0.10" stroke-width=".8"/>
<path d="M811.6 8h115" stroke="#3a9458" stroke-opacity="0.09" stroke-width=".8"/>
<path d="M777 218.5h131.3" stroke="#3a9458" stroke-opacity="0.14" stroke-width=".8"/>
<path d="M748.4 44.3h75.3" stroke="#3a9458" stroke-opacity="0.14" stroke-width=".8"/>
<path d="M745.5 447.4h42.9" stroke="#3a9458" stroke-opacity="0.16" stroke-width=".8"/>
<path d="M799.3 286.9h63.1" stroke="#3a9458" stroke-opacity="0.19" stroke-width=".8"/>
<path d="M878.6 218.7h70" stroke="#3a9458" stroke-opacity="0.12" stroke-width=".8"/>
<path d="M999.1 605h70.9" stroke="#3a9458" stroke-opacity="0.10" stroke-width=".8"/>
<path d="M777 509.6h20.8" stroke="#3a9458" stroke-opacity="0.19" stroke-width=".8"/>
<path d="M949.7 296.6h76.9" stroke="#3a9458" stroke-opacity="0.18" stroke-width=".8"/>
<path d="M765.5 322.6h22.1" stroke="#3a9458" stroke-opacity="0.14" stroke-width=".8"/>
<path d="M974.7 448.5h32.5" stroke="#3a9458" stroke-opacity="0.15" stroke-width=".8"/>
<path d="M861.2 259.6h40.4" stroke="#3a9458" stroke-opacity="0.11" stroke-width=".8"/>
<path d="M979.1 364.8h35.2" stroke="#3a9458" stroke-opacity="0.13" stroke-width=".8"/>
<path d="M990.7 563.4h47.6" stroke="#3a9458" stroke-opacity="0.09" stroke-width=".8"/>
<path d="M993.2 660.2h87.6" stroke="#3a9458" stroke-opacity="0.08" stroke-width=".8"/>
<path d="M828.6 648.3h146.6" stroke="#3a9458" stroke-opacity="0.15" stroke-width=".8"/>
<path d="M764.9 577.2h130" stroke="#3a9458" stroke-opacity="0.10" stroke-width=".8"/>
<path d="M957 283.1h136.1" stroke="#3a9458" stroke-opacity="0.09" stroke-width=".8"/>
<path d="M831.9 152.7h92.5" stroke="#3a9458" stroke-opacity="0.12" stroke-width=".8"/>
<path d="M789.2 86.1h121.5" stroke="#3a9458" stroke-opacity="0.19" stroke-width=".8"/>
<path d="M877.5 28.8h126" stroke="#3a9458" stroke-opacity="0.07" stroke-width=".8"/>
<path d="M753 586.7h103.9" stroke="#3a9458" stroke-opacity="0.14" stroke-width=".8"/>
<path d="M805.7 438.9h78.8" stroke="#3a9458" stroke-opacity="0.15" stroke-width=".8"/>
<path d="M904.5 298h82.6" stroke="#3a9458" stroke-opacity="0.13" stroke-width=".8"/>
<path d="M893.3 16.4h88.5" stroke="#3a9458" stroke-opacity="0.10" stroke-width=".8"/>
<path d="M938.4 534.5h84.2" stroke="#3a9458" stroke-opacity="0.09" stroke-width=".8"/>
<path d="M750 331.3h38" stroke="#3a9458" stroke-opacity="0.13" stroke-width=".8"/>
<path d="M843.8 64.2h91.4" stroke="#3a9458" stroke-opacity="0.08" stroke-width=".8"/>
<path d="M743 445.5h122.7" stroke="#3a9458" stroke-opacity="0.17" stroke-width=".8"/>
<path d="M735.2 358h90.5" stroke="#3a9458" stroke-opacity="0.12" stroke-width=".8"/>
<path d="M758.1 665.6h140" stroke="#3a9458" stroke-opacity="0.20" stroke-width=".8"/>
<path d="M948.2 512.5h47.1" stroke="#3a9458" stroke-opacity="0.20" stroke-width=".8"/>
<path d="M987.9 344.3h148.2" stroke="#3a9458" stroke-opacity="0.09" stroke-width=".8"/>
<path d="M980.6 551.9h29.2" stroke="#3a9458" stroke-opacity="0.12" stroke-width=".8"/>
<path d="M764.5 529.3h145.5" stroke="#3a9458" stroke-opacity="0.11" stroke-width=".8"/>
<path d="M760.2 570.9h90.3" stroke="#3a9458" stroke-opacity="0.19" stroke-width=".8"/>
<path d="M793.6 145.8h90.8" stroke="#3a9458" stroke-opacity="0.11" stroke-width=".8"/>
<path d="M771 25.8h42.6" stroke="#3a9458" stroke-opacity="0.19" stroke-width=".8"/>
<path d="M970.7 475.8h43.6" stroke="#3a9458" stroke-opacity="0.17" stroke-width=".8"/>
<path d="M868.6 80.6h109.1" stroke="#3a9458" stroke-opacity="0.12" stroke-width=".8"/>
<path d="M875.5 611.1h101.2" stroke="#3a9458" stroke-opacity="0.18" stroke-width=".8"/>
<path d="M998 73.2h108.2" stroke="#3a9458" stroke-opacity="0.12" stroke-width=".8"/>
<path d="M794.1 558.4h158.7" stroke="#3a9458" stroke-opacity="0.15" stroke-width=".8"/>
<path d="M934.1 252.2h81.9" stroke="#3a9458" stroke-opacity="0.09" stroke-width=".8"/>
<path d="M733.5 520.5h134.8" stroke="#3a9458" stroke-opacity="0.10" stroke-width=".8"/>
<path d="M995.5 447.5h102" stroke="#3a9458" stroke-opacity="0.16" stroke-width=".8"/>
<path d="M720.5 218.9h24.7" stroke="#3a9458" stroke-opacity="0.09" stroke-width=".8"/>
<path d="M841 431.2h91.8" stroke="#3a9458" stroke-opacity="0.19" stroke-width=".8"/>
<path d="M783.6 92.4h111.4" stroke="#3a9458" stroke-opacity="0.07" stroke-width=".8"/>
<path d="M819.4 1.8h34.9" stroke="#3a9458" stroke-opacity="0.12" stroke-width=".8"/>
<path d="M883.4 157h102.5" stroke="#3a9458" stroke-opacity="0.10" stroke-width=".8"/>
<path d="M853 436.8h38.9" stroke="#3a9458" stroke-opacity="0.19" stroke-width=".8"/>
<path d="M761.8 170.5h33.4" stroke="#3a9458" stroke-opacity="0.15" stroke-width=".8"/>
<path d="M939 609.9h76.3" stroke="#3a9458" stroke-opacity="0.10" stroke-width=".8"/>
<path d="M900.6 8h98.7" stroke="#3a9458" stroke-opacity="0.12" stroke-width=".8"/>
<path d="M844.3 451.9h151.2" stroke="#3a9458" stroke-opacity="0.17" stroke-width=".8"/>
<path d="M973 173.9h26.2" stroke="#3a9458" stroke-opacity="0.14" stroke-width=".8"/>
<path d="M786.5 284.2h28.2" stroke="#3a9458" stroke-opacity="0.17" stroke-width=".8"/>
<path d="M874.3 8.6h151.7" stroke="#3a9458" stroke-opacity="0.09" stroke-width=".8"/>
<path d="M890.3 139.7h91" stroke="#3a9458" stroke-opacity="0.15" stroke-width=".8"/>
<path d="M768.9 569.4h63.3" stroke="#3a9458" stroke-opacity="0.11" stroke-width=".8"/>
<path d="M969 33.9h129.6" stroke="#3a9458" stroke-opacity="0.16" stroke-width=".8"/>
<path d="M956.4 4.4h124.3" stroke="#3a9458" stroke-opacity="0.13" stroke-width=".8"/>
<path d="M846.7 519.2h51.6" stroke="#3a9458" stroke-opacity="0.08" stroke-width=".8"/>
<path d="M730.9 162.6h67" stroke="#3a9458" stroke-opacity="0.17" stroke-width=".8"/>
<path d="M956.7 486.6h119.6" stroke="#3a9458" stroke-opacity="0.10" stroke-width=".8"/>
<path d="M842.1 387.7h130.4" stroke="#3a9458" stroke-opacity="0.14" stroke-width=".8"/>
<path d="M899.8 185.7h155.1" stroke="#3a9458" stroke-opacity="0.10" stroke-width=".8"/>
<path d="M724.3 616h56.5" stroke="#3a9458" stroke-opacity="0.10" stroke-width=".8"/>
<path d="M984.5 520.7h124.5" stroke="#3a9458" stroke-opacity="0.11" stroke-width=".8"/>
<path d="M812 616.1h53.5" stroke="#3a9458" stroke-opacity="0.19" stroke-width=".8"/>
<path d="M914 441.5h113.1" stroke="#3a9458" stroke-opacity="0.20" stroke-width=".8"/>
<path d="M955.1 328.6h117.7" stroke="#3a9458" stroke-opacity="0.18" stroke-width=".8"/>
<path d="M922.9 306h99.8" stroke="#3a9458" stroke-opacity="0.11" stroke-width=".8"/>
<path d="M894.3 148.4h30.9" stroke="#3a9458" stroke-opacity="0.19" stroke-width=".8"/>
<path d="M727.5 101.2h34.9" stroke="#3a9458" stroke-opacity="0.19" stroke-width=".8"/>
<path d="M759.7 241.4h24" stroke="#3a9458" stroke-opacity="0.08" stroke-width=".8"/>
<path d="M897.5 484.8h117.6" stroke="#3a9458" stroke-opacity="0.17" stroke-width=".8"/>
<path d="M885.3 46h70.9" stroke="#3a9458" stroke-opacity="0.18" stroke-width=".8"/>
<path d="M969.6 573.7h29.2" stroke="#3a9458" stroke-opacity="0.18" stroke-width=".8"/>
<path d="M984.4 640.1h35" stroke="#3a9458" stroke-opacity="0.10" stroke-width=".8"/>
<path d="M729.6 78.4h138.7" stroke="#3a9458" stroke-opacity="0.18" stroke-width=".8"/>
<path d="M951 443.9h108.4" stroke="#3a9458" stroke-opacity="0.11" stroke-width=".8"/>
<path d="M747.4 69.9h126" stroke="#3a9458" stroke-opacity="0.10" stroke-width=".8"/>
<path d="M838.7 223.4h22.9" stroke="#3a9458" stroke-opacity="0.10" stroke-width=".8"/>
<path d="M920.4 197.8h71.5" stroke="#3a9458" stroke-opacity="0.11" stroke-width=".8"/>
<path d="M861 674.8h139.2" stroke="#3a9458" stroke-opacity="0.15" stroke-width=".8"/>
<path d="M835.6 21.7h81.1" stroke="#3a9458" stroke-opacity="0.17" stroke-width=".8"/>
<path d="M917.3 242.7h95.3" stroke="#3a9458" stroke-opacity="0.10" stroke-width=".8"/>
<path d="M745.4 603.6h134.8" stroke="#3a9458" stroke-opacity="0.09" stroke-width=".8"/>
<path d="M776.6 0.9h126.7" stroke="#3a9458" stroke-opacity="0.20" stroke-width=".8"/>
<path d="M857.4 3.1h88.8" stroke="#3a9458" stroke-opacity="0.17" stroke-width=".8"/>
<path d="M858.5 129.2h68.6" stroke="#3a9458" stroke-opacity="0.18" stroke-width=".8"/>
<path d="M984.3 182.4h59.7" stroke="#3a9458" stroke-opacity="0.10" stroke-width=".8"/>
<path d="M859.5 489.6h35.4" stroke="#3a9458" stroke-opacity="0.15" stroke-width=".8"/>
<path d="M940.6 56.6h117.6" stroke="#3a9458" stroke-opacity="0.17" stroke-width=".8"/>
<path d="M819.6 439.6h76.2" stroke="#3a9458" stroke-opacity="0.12" stroke-width=".8"/>
<path d="M744.1 623.3h144.4" stroke="#3a9458" stroke-opacity="0.07" stroke-width=".8"/>
<path d="M793.7 144.3h146.2" stroke="#3a9458" stroke-opacity="0.14" stroke-width=".8"/>
<path d="M967.5 265.5h52.7" stroke="#3a9458" stroke-opacity="0.13" stroke-width=".8"/>
<path d="M931.3 372.1h125.4" stroke="#3a9458" stroke-opacity="0.15" stroke-width=".8"/>
<path d="M811.5 243.9h41.7" stroke="#3a9458" stroke-opacity="0.18" stroke-width=".8"/>
<path d="M927.8 463.5h43.7" stroke="#3a9458" stroke-opacity="0.13" stroke-width=".8"/>
<path d="M882.2 541.4h37.6" stroke="#3a9458" stroke-opacity="0.13" stroke-width=".8"/>
<path d="M786.6 619.6h46.8" stroke="#3a9458" stroke-opacity="0.11" stroke-width=".8"/>
<path d="M956.2 492.2h41.6" stroke="#3a9458" stroke-opacity="0.09" stroke-width=".8"/>
<path d="M811.4 173.3h93.1" stroke="#3a9458" stroke-opacity="0.09" stroke-width=".8"/>
<path d="M773 229.7h156.5" stroke="#3a9458" stroke-opacity="0.16" stroke-width=".8"/>
<path d="M989.5 71.3h34.2" stroke="#3a9458" stroke-opacity="0.12" stroke-width=".8"/>
<path d="M942.6 688.7h122.7" stroke="#3a9458" stroke-opacity="0.13" stroke-width=".8"/>
<path d="M898.6 137.3h35" stroke="#3a9458" stroke-opacity="0.10" stroke-width=".8"/>
<path d="M729.5 271.8h75.9" stroke="#3a9458" stroke-opacity="0.17" stroke-width=".8"/>
<path d="M860.1 485.4h108.5" stroke="#3a9458" stroke-opacity="0.13" stroke-width=".8"/>
<path d="M889 99.3h76.7" stroke="#3a9458" stroke-opacity="0.17" stroke-width=".8"/>
<path d="M840.4 635.6h100.4" stroke="#3a9458" stroke-opacity="0.17" stroke-width=".8"/>
<path d="M784 294.8h121.1" stroke="#3a9458" stroke-opacity="0.18" stroke-width=".8"/>
<path d="M916 541.8h139.3" stroke="#3a9458" stroke-opacity="0.16" stroke-width=".8"/>
<path d="M847.1 449.1h63.8" stroke="#3a9458" stroke-opacity="0.15" stroke-width=".8"/>
<path d="M837.5 68.5h129.5" stroke="#3a9458" stroke-opacity="0.16" stroke-width=".8"/>
<path d="M790 440.7h79.3" stroke="#3a9458" stroke-opacity="0.13" stroke-width=".8"/>
<path d="M548 0v720" stroke="#2a8868" stroke-opacity=".1" stroke-width=".8"/>
<path d="M560 0v720" stroke="#2a8868" stroke-opacity=".1" stroke-width=".8"/>
<path d="M640 0v720" stroke="#2a8868" stroke-opacity=".1" stroke-width=".8"/>
<path d="M652 0v720" stroke="#2a8868" stroke-opacity=".1" stroke-width=".8"/>
<path d="M722 0v720" stroke="#2a8868" stroke-opacity=".1" stroke-width=".8"/>
<path d="M732 0v720" stroke="#2a8868" stroke-opacity=".1" stroke-width=".8"/>
<path d="M700 465h324" stroke="#2a8868" stroke-opacity=".14" stroke-width=".8" stroke-dasharray="6 3"/>
<path d="M700 500h324" stroke="#2a8868" stroke-opacity=".14" stroke-width=".8" stroke-dasharray="6 3"/>
<path d="M700 555h324" stroke="#2a8868" stroke-opacity=".14" stroke-width=".8" stroke-dasharray="6 3"/>
<path d="M700 662h324" stroke="#2a8868" stroke-opacity=".14" stroke-width=".8" stroke-dasharray="6 3"/>
<path d="M700 680h324" stroke="#2a8868" stroke-opacity=".14" stroke-width=".8" stroke-dasharray="6 3"/>
<path d="M700 695h324" stroke="#2a8868" stroke-opacity=".14" stroke-width=".8" stroke-dasharray="6 3"/>
<path d="M827.3 151.2L803.9 206.4A246 246 0 0 1 726.1 153.9L768.5 111.5A186 186 0 0 0 827.3 151.2z" fill="#5aa84e" fill-opacity="0.11" stroke="#5aa84e" stroke-opacity=".3" stroke-width=".9"/>
<path d="M823.8 159.5A195 195 0 0 1 762.1 117.9" stroke="#5aa84e" stroke-opacity="0.16" stroke-width="0.7"/>
<path d="M819.9 168.7A205 205 0 0 1 755 125" stroke="#5aa84e" stroke-opacity="0.16" stroke-width="0.7"/>
<path d="M816 177.9A215 215 0 0 1 748 132" stroke="#5aa84e" stroke-opacity="0.16" stroke-width="0.7"/>
<path d="M812.1 187.1A225 225 0 0 1 740.9 139.1" stroke="#5aa84e" stroke-opacity="0.16" stroke-width="0.7"/>
<path d="M808.2 196.3A235 235 0 0 1 733.8 146.2" stroke="#5aa84e" stroke-opacity="0.16" stroke-width="0.7"/>
<path d="M862 400C858 380 862 366 874 361C880 360 884 364 883 372C882 380 878 386 874 388M874 388C884 392 896 390 902 386C896 394 892 398 892 404C892 410 896 414 902 416M862 400C864 430 872 452 890 460C900 462 906 452 906 442" stroke="#3a9458" stroke-opacity=".32" stroke-width="1.100"/>
<circle cx="897" cy="442" r="3" stroke="#3a9458" stroke-opacity=".28" stroke-width=".8"/>
<circle cx="897" cy="442" r="6" stroke="#3a9458" stroke-opacity=".28" stroke-width=".8"/>
<circle cx="897" cy="442" r="9" stroke="#3a9458" stroke-opacity=".28" stroke-width=".8"/>
<circle cx="897" cy="442" r="12" stroke="#3a9458" stroke-opacity=".28" stroke-width=".8"/>
<circle cx="872" cy="371" r="2.5" stroke="#3a9458" stroke-opacity=".28" stroke-width=".8"/>
<circle cx="872" cy="371" r="5" stroke="#3a9458" stroke-opacity=".28" stroke-width=".8"/>
<rect x="918" y="361" width="5" height="8" rx="2" stroke="#5aa84e" stroke-opacity=".32" stroke-width=".9"/>
<rect x="928" y="361" width="5" height="8" rx="2" stroke="#5aa84e" stroke-opacity=".32" stroke-width=".9"/>
<rect x="938" y="361" width="5" height="8" rx="2" stroke="#5aa84e" stroke-opacity=".32" stroke-width=".9"/>
<rect x="948" y="361" width="5" height="8" rx="2" stroke="#5aa84e" stroke-opacity=".32" stroke-width=".9"/>
<rect x="958" y="361" width="5" height="8" rx="2" stroke="#5aa84e" stroke-opacity=".32" stroke-width=".9"/>
<circle cx="925" cy="407" r="2.600" stroke="#5aa84e" stroke-opacity=".32" stroke-width=".9"/>
<circle cx="936" cy="407" r="2.600" stroke="#5aa84e" stroke-opacity=".32" stroke-width=".9"/>
<circle cx="947" cy="407" r="2.600" stroke="#5aa84e" stroke-opacity=".32" stroke-width=".9"/>
<circle cx="958" cy="407" r="2.600" stroke="#5aa84e" stroke-opacity=".32" stroke-width=".9"/>
<rect x="966" y="358" width="7" height="9" stroke="#5aa84e" stroke-opacity=".34" stroke-width="1"/>
<rect x="966" y="400" width="7" height="9" stroke="#5aa84e" stroke-opacity=".34" stroke-width="1"/>
<rect x="1011" y="380" width="7" height="9" stroke="#5aa84e" stroke-opacity=".34" stroke-width="1"/>
<rect x="1011" y="398" width="7" height="9" stroke="#5aa84e" stroke-opacity=".34" stroke-width="1"/>
<rect x="797" y="364" width="7" height="9" stroke="#5aa84e" stroke-opacity=".34" stroke-width="1"/>
<rect x="906" y="362" width="9" height="10" rx="3" stroke="#3a9458" stroke-opacity=".26" stroke-width="1"/>
<rect x="906" y="376" width="9" height="10" rx="3" stroke="#3a9458" stroke-opacity=".26" stroke-width="1"/>
<rect x="906" y="390" width="9" height="10" rx="3" stroke="#3a9458" stroke-opacity=".26" stroke-width="1"/>
<rect x="906" y="404" width="9" height="10" rx="3" stroke="#3a9458" stroke-opacity=".26" stroke-width="1"/>
<rect x="906" y="420" width="9" height="10" rx="3" stroke="#3a9458" stroke-opacity=".26" stroke-width="1"/>
<rect x="906" y="436" width="9" height="10" rx="3" stroke="#3a9458" stroke-opacity=".26" stroke-width="1"/>
<rect x="906" y="452" width="9" height="10" rx="3" stroke="#3a9458" stroke-opacity=".26" stroke-width="1"/>
<rect x="834" y="434" width="8" height="12" stroke="#3a9458" stroke-opacity="0.2" stroke-width=".8"/>
<rect x="829" y="436" width="4" height="4" rx="1" stroke="#3a9458" stroke-opacity="0.2" stroke-width=".7"/>
<rect x="829" y="443" width="4" height="4" rx="1" stroke="#3a9458" stroke-opacity="0.2" stroke-width=".7"/>
<rect x="844" y="436" width="4" height="4" rx="1" stroke="#3a9458" stroke-opacity="0.2" stroke-width=".7"/>
<rect x="844" y="443" width="4" height="4" rx="1" stroke="#3a9458" stroke-opacity="0.2" stroke-width=".7"/>
<rect x="836" y="429" width="4" height="4" rx="1" stroke="#3a9458" stroke-opacity="0.2" stroke-width=".7"/>
<rect x="836" y="448" width="4" height="4" rx="1" stroke="#3a9458" stroke-opacity="0.2" stroke-width=".7"/>
<rect x="834" y="476" width="8" height="12" stroke="#3a9458" stroke-opacity="0.2" stroke-width=".8"/>
<rect x="829" y="478" width="4" height="4" rx="1" stroke="#3a9458" stroke-opacity="0.2" stroke-width=".7"/>
<rect x="829" y="485" width="4" height="4" rx="1" stroke="#3a9458" stroke-opacity="0.2" stroke-width=".7"/>
<rect x="844" y="478" width="4" height="4" rx="1" stroke="#3a9458" stroke-opacity="0.2" stroke-width=".7"/>
<rect x="844" y="485" width="4" height="4" rx="1" stroke="#3a9458" stroke-opacity="0.2" stroke-width=".7"/>
<rect x="836" y="471" width="4" height="4" rx="1" stroke="#3a9458" stroke-opacity="0.2" stroke-width=".7"/>
<rect x="836" y="490" width="4" height="4" rx="1" stroke="#3a9458" stroke-opacity="0.2" stroke-width=".7"/>
<rect x="834" y="509" width="8" height="12" stroke="#3a9458" stroke-opacity="0.2" stroke-width=".8"/>
<rect x="829" y="511" width="4" height="4" rx="1" stroke="#3a9458" stroke-opacity="0.2" stroke-width=".7"/>
<rect x="829" y="518" width="4" height="4" rx="1" stroke="#3a9458" stroke-opacity="0.2" stroke-width=".7"/>
<rect x="844" y="511" width="4" height="4" rx="1" stroke="#3a9458" stroke-opacity="0.2" stroke-width=".7"/>
<rect x="844" y="518" width="4" height="4" rx="1" stroke="#3a9458" stroke-opacity="0.2" stroke-width=".7"/>
<rect x="836" y="504" width="4" height="4" rx="1" stroke="#3a9458" stroke-opacity="0.2" stroke-width=".7"/>
<rect x="836" y="523" width="4" height="4" rx="1" stroke="#3a9458" stroke-opacity="0.2" stroke-width=".7"/>
<rect x="834" y="542" width="8" height="12" stroke="#3a9458" stroke-opacity="0.2" stroke-width=".8"/>
<rect x="829" y="544" width="4" height="4" rx="1" stroke="#3a9458" stroke-opacity="0.2" stroke-width=".7"/>
<rect x="829" y="551" width="4" height="4" rx="1" stroke="#3a9458" stroke-opacity="0.2" stroke-width=".7"/>
<rect x="844" y="544" width="4" height="4" rx="1" stroke="#3a9458" stroke-opacity="0.2" stroke-width=".7"/>
<rect x="844" y="551" width="4" height="4" rx="1" stroke="#3a9458" stroke-opacity="0.2" stroke-width=".7"/>
<rect x="836" y="537" width="4" height="4" rx="1" stroke="#3a9458" stroke-opacity="0.2" stroke-width=".7"/>
<rect x="836" y="556" width="4" height="4" rx="1" stroke="#3a9458" stroke-opacity="0.2" stroke-width=".7"/>
<rect x="869" y="542" width="8" height="12" stroke="#3a9458" stroke-opacity="0.2" stroke-width=".8"/>
<rect x="864" y="544" width="4" height="4" rx="1" stroke="#3a9458" stroke-opacity="0.2" stroke-width=".7"/>
<rect x="864" y="551" width="4" height="4" rx="1" stroke="#3a9458" stroke-opacity="0.2" stroke-width=".7"/>
<rect x="879" y="544" width="4" height="4" rx="1" stroke="#3a9458" stroke-opacity="0.2" stroke-width=".7"/>
<rect x="879" y="551" width="4" height="4" rx="1" stroke="#3a9458" stroke-opacity="0.2" stroke-width=".7"/>
<rect x="871" y="537" width="4" height="4" rx="1" stroke="#3a9458" stroke-opacity="0.2" stroke-width=".7"/>
<rect x="871" y="556" width="4" height="4" rx="1" stroke="#3a9458" stroke-opacity="0.2" stroke-width=".7"/>
<rect x="834" y="584" width="8" height="12" stroke="#3a9458" stroke-opacity="0.2" stroke-width=".8"/>
<rect x="829" y="586" width="4" height="4" rx="1" stroke="#3a9458" stroke-opacity="0.2" stroke-width=".7"/>
<rect x="829" y="593" width="4" height="4" rx="1" stroke="#3a9458" stroke-opacity="0.2" stroke-width=".7"/>
<rect x="844" y="586" width="4" height="4" rx="1" stroke="#3a9458" stroke-opacity="0.2" stroke-width=".7"/>
<rect x="844" y="593" width="4" height="4" rx="1" stroke="#3a9458" stroke-opacity="0.2" stroke-width=".7"/>
<rect x="836" y="579" width="4" height="4" rx="1" stroke="#3a9458" stroke-opacity="0.2" stroke-width=".7"/>
<rect x="836" y="598" width="4" height="4" rx="1" stroke="#3a9458" stroke-opacity="0.2" stroke-width=".7"/>
<rect x="869" y="509" width="8" height="12" stroke="#3a9458" stroke-opacity="0.2" stroke-width=".8"/>
<rect x="864" y="511" width="4" height="4" rx="1" stroke="#3a9458" stroke-opacity="0.2" stroke-width=".7"/>
<rect x="864" y="518" width="4" height="4" rx="1" stroke="#3a9458" stroke-opacity="0.2" stroke-width=".7"/>
<rect x="879" y="511" width="4" height="4" rx="1" stroke="#3a9458" stroke-opacity="0.2" stroke-width=".7"/>
<rect x="879" y="518" width="4" height="4" rx="1" stroke="#3a9458" stroke-opacity="0.2" stroke-width=".7"/>
<rect x="871" y="504" width="4" height="4" rx="1" stroke="#3a9458" stroke-opacity="0.2" stroke-width=".7"/>
<rect x="871" y="523" width="4" height="4" rx="1" stroke="#3a9458" stroke-opacity="0.2" stroke-width=".7"/>
<rect x="936" y="474" width="8" height="12" stroke="#3a9458" stroke-opacity="0.2" stroke-width=".8"/>
<rect x="931" y="476" width="4" height="4" rx="1" stroke="#3a9458" stroke-opacity="0.2" stroke-width=".7"/>
<rect x="931" y="483" width="4" height="4" rx="1" stroke="#3a9458" stroke-opacity="0.2" stroke-width=".7"/>
<rect x="946" y="476" width="4" height="4" rx="1" stroke="#3a9458" stroke-opacity="0.2" stroke-width=".7"/>
<rect x="946" y="483" width="4" height="4" rx="1" stroke="#3a9458" stroke-opacity="0.2" stroke-width=".7"/>
<rect x="938" y="469" width="4" height="4" rx="1" stroke="#3a9458" stroke-opacity="0.2" stroke-width=".7"/>
<rect x="938" y="488" width="4" height="4" rx="1" stroke="#3a9458" stroke-opacity="0.2" stroke-width=".7"/>
<rect x="936" y="514" width="8" height="12" stroke="#3a9458" stroke-opacity="0.2" stroke-width=".8"/>
<rect x="931" y="516" width="4" height="4" rx="1" stroke="#3a9458" stroke-opacity="0.2" stroke-width=".7"/>
<rect x="931" y="523" width="4" height="4" rx="1" stroke="#3a9458" stroke-opacity="0.2" stroke-width=".7"/>
<rect x="946" y="516" width="4" height="4" rx="1" stroke="#3a9458" stroke-opacity="0.2" stroke-width=".7"/>
<rect x="946" y="523" width="4" height="4" rx="1" stroke="#3a9458" stroke-opacity="0.2" stroke-width=".7"/>
<rect x="938" y="509" width="4" height="4" rx="1" stroke="#3a9458" stroke-opacity="0.2" stroke-width=".7"/>
<rect x="938" y="528" width="4" height="4" rx="1" stroke="#3a9458" stroke-opacity="0.2" stroke-width=".7"/>
<rect x="996" y="464" width="8" height="12" stroke="#3a9458" stroke-opacity="0.2" stroke-width=".8"/>
<rect x="991" y="466" width="4" height="4" rx="1" stroke="#3a9458" stroke-opacity="0.2" stroke-width=".7"/>
<rect x="991" y="473" width="4" height="4" rx="1" stroke="#3a9458" stroke-opacity="0.2" stroke-width=".7"/>
<rect x="1006" y="466" width="4" height="4" rx="1" stroke="#3a9458" stroke-opacity="0.2" stroke-width=".7"/>
<rect x="1006" y="473" width="4" height="4" rx="1" stroke="#3a9458" stroke-opacity="0.2" stroke-width=".7"/>
<rect x="998" y="459" width="4" height="4" rx="1" stroke="#3a9458" stroke-opacity="0.2" stroke-width=".7"/>
<rect x="998" y="478" width="4" height="4" rx="1" stroke="#3a9458" stroke-opacity="0.2" stroke-width=".7"/>
<rect x="732" y="577" width="33" height="7" rx="3" stroke="#7a853a" stroke-opacity=".4" stroke-width="1.200"/>
<path d="M900 76v18" stroke="#3a9458" stroke-opacity=".14" stroke-width=".7"/>
<path d="M903 76v18" stroke="#3a9458" stroke-opacity=".14" stroke-width=".7"/>
<path d="M906 76v18" stroke="#3a9458" stroke-opacity=".14" stroke-width=".7"/>
<path d="M909 76v18" stroke="#3a9458" stroke-opacity=".14" stroke-width=".7"/>
<path d="M912 76v18" stroke="#3a9458" stroke-opacity=".14" stroke-width=".7"/>
<path d="M915 76v18" stroke="#3a9458" stroke-opacity=".14" stroke-width=".7"/>
<path d="M918 76v18" stroke="#3a9458" stroke-opacity=".14" stroke-width=".7"/>
<path d="M921 76v18" stroke="#3a9458" stroke-opacity=".14" stroke-width=".7"/>
<path d="M924 76v18" stroke="#3a9458" stroke-opacity=".14" stroke-width=".7"/>
<path d="M927 76v18" stroke="#3a9458" stroke-opacity=".14" stroke-width=".7"/>
<path d="M930 76v18" stroke="#3a9458" stroke-opacity=".14" stroke-width=".7"/>
<path d="M933 76v18" stroke="#3a9458" stroke-opacity=".14" stroke-width=".7"/>
<path d="M936 76v18" stroke="#3a9458" stroke-opacity=".14" stroke-width=".7"/>
<path d="M939 76v18" stroke="#3a9458" stroke-opacity=".14" stroke-width=".7"/>
<path d="M942 76v18" stroke="#3a9458" stroke-opacity=".14" stroke-width=".7"/>
<path d="M945 76v18" stroke="#3a9458" stroke-opacity=".14" stroke-width=".7"/>
<path d="M948 76v18" stroke="#3a9458" stroke-opacity=".14" stroke-width=".7"/>
<path d="M951 76v18" stroke="#3a9458" stroke-opacity=".14" stroke-width=".7"/>
<path d="M954 76v18" stroke="#3a9458" stroke-opacity=".14" stroke-width=".7"/>
<path d="M957 76v18" stroke="#3a9458" stroke-opacity=".14" stroke-width=".7"/>
<path d="M960 76v18" stroke="#3a9458" stroke-opacity=".14" stroke-width=".7"/>
<path d="M963 76v18" stroke="#3a9458" stroke-opacity=".14" stroke-width=".7"/>
<path d="M966 76v18" stroke="#3a9458" stroke-opacity=".14" stroke-width=".7"/>
<path d="M969 76v18" stroke="#3a9458" stroke-opacity=".14" stroke-width=".7"/>
<path d="M972 76v18" stroke="#3a9458" stroke-opacity=".14" stroke-width=".7"/>
<path d="M975 76v18" stroke="#3a9458" stroke-opacity=".14" stroke-width=".7"/>
<path d="M978 76v18" stroke="#3a9458" stroke-opacity=".14" stroke-width=".7"/>
<path d="M846 72v22" stroke="#3a9458" stroke-opacity=".14" stroke-width=".7"/>
<path d="M849 72v22" stroke="#3a9458" stroke-opacity=".14" stroke-width=".7"/>
<path d="M852 72v22" stroke="#3a9458" stroke-opacity=".14" stroke-width=".7"/>
<path d="M855 72v22" stroke="#3a9458" stroke-opacity=".14" stroke-width=".7"/>
<path d="M858 72v22" stroke="#3a9458" stroke-opacity=".14" stroke-width=".7"/>
<path d="M861 72v22" stroke="#3a9458" stroke-opacity=".14" stroke-width=".7"/>
<path d="M864 72v22" stroke="#3a9458" stroke-opacity=".14" stroke-width=".7"/>
<path d="M867 72v22" stroke="#3a9458" stroke-opacity=".14" stroke-width=".7"/>
<path d="M870 72v22" stroke="#3a9458" stroke-opacity=".14" stroke-width=".7"/>
<path d="M873 72v22" stroke="#3a9458" stroke-opacity=".14" stroke-width=".7"/>
<path d="M876 72v22" stroke="#3a9458" stroke-opacity=".14" stroke-width=".7"/>
<path d="M879 72v22" stroke="#3a9458" stroke-opacity=".14" stroke-width=".7"/>
<path d="M882 72v22" stroke="#3a9458" stroke-opacity=".14" stroke-width=".7"/>
<path d="M885 72v22" stroke="#3a9458" stroke-opacity=".14" stroke-width=".7"/>
<path d="M888 72v22" stroke="#3a9458" stroke-opacity=".14" stroke-width=".7"/>
<path d="M891 72v22" stroke="#3a9458" stroke-opacity=".14" stroke-width=".7"/>
<path d="M894 72v22" stroke="#3a9458" stroke-opacity=".14" stroke-width=".7"/>
<path d="M847 92a5 5 0 0 1 10 0" stroke="#7a853a" stroke-opacity=".3" stroke-width=".9"/>
<path d="M867 92a5 5 0 0 1 10 0" stroke="#7a853a" stroke-opacity=".3" stroke-width=".9"/>
<path d="M925 700a5 5 0 0 1 10 0" stroke="#7a853a" stroke-opacity=".3" stroke-width=".9"/>
<path d="M955 640a5 5 0 0 1 10 0" stroke="#7a853a" stroke-opacity=".3" stroke-width=".9"/>
<path d="M764 107l4.500 -4.500l4.500 4.500z" fill="#8a7a3a" fill-opacity=".5"/>
<path d="M1014 621l-5 5l5 5z" fill="#8a7a3a" fill-opacity=".5"/>
</g>
</svg>

<!-- desktop icons -->
<svg class="abs" style="left:31px;top:8px" width="64" height="64" viewBox="0 0 64 64">
<defs><linearGradient id="fb" x1="0" y1="0" x2="0" y2="1"><stop offset="0" stop-color="#6ec3f0"/><stop offset="1" stop-color="#3daee9"/></linearGradient></defs>
<path d="M5 6h24l4 4.5h28v12H5z" fill="#147eb8"/>
<path d="M4 20h18.500l4-4H62v42H4z" fill="url(#fb)"/>
<path d="M4 57h58v1H4z" fill="#2f9bd6"/>
<g fill="none" stroke="#1b7db6" stroke-width="1.150"><path d="M23.500 37.500l9.500-9.500 9.500 9.500M25.500 36v10.500h15V36M38.500 32.500v-3"/><path d="M31.500 46.500v-5h3v5" fill="#1b7db6"/></g>
</svg>
<div class="dlabel" style="left:13.500px;top:78px;width:100px;letter-spacing:.2px">Home</div>
<svg class="abs" style="left:159px;top:8px" width="64" height="64" viewBox="0 0 64 64">
<defs><linearGradient id="ft" x1="0" y1="0" x2="0" y2="1"><stop offset="0" stop-color="#f62a61"/><stop offset="1" stop-color="#e80f47"/></linearGradient></defs>
<path d="M5 6h24l4 4.500h28v12H5z" fill="#9c0c2c"/>
<path d="M4 20h18.500l4-4H62v42H4z" fill="url(#ft)"/>
<path d="M4 57h58v1H4z" fill="#cf0d3f"/>
<g fill="none" stroke="#b80b3a" stroke-width="1"><path d="M23 29.500h20M29.500 29.500v-2h7v2M25.500 29.500v17h15v-17M30.500 34v9M35.500 34v9"/></g>
</svg>
<div class="dlabel" style="left:141px;top:78px;width:100px">Trash</div>

<!-- toolbox -->
<div class="abs" style="left:994px;top:0;width:30px;height:30px;background:rgba(214,224,224,.42);border-bottom-left-radius:1px">
<div class="abs" style="left:9px;top:10px;width:12px;height:2px;background:#4f5558"></div>
<div class="abs" style="left:9px;top:14px;width:12px;height:2px;background:#4f5558"></div>
<div class="abs" style="left:9px;top:18px;width:12px;height:2px;background:#4f5558"></div>
</div>

<!-- window -->
<div id="win">
<div id="tbar"></div><div id="tline"></div>
<svg class="abs" style="left:0;top:0" width="565" height="28" viewBox="0 0 565 28">
<g stroke="#2a2e32" stroke-width="1.500" fill="none"><path d="M11 9.250h14M11 14h14M11 18.750h14"/></g>
<g transform="translate(41.100,15.100) rotate(45)" fill="#fcfcfc"><rect x="-2.300" y="-8.300" width="4.600" height="8"/><rect x="-4.200" y="-.900" width="8.400" height="1.700"/><rect x="-.650" y="0" width="1.300" height="6"/></g>
<g stroke="#fcfcfc" stroke-width="1.300" fill="none">
<path d="M494 17l5 -5.500l5 5.500" transform="translate(24,0)"/>
<path d="M494 11.500l5 5.500l5 -5.500"/>
</g>
<circle cx="547" cy="14" r="9" fill="#fcfcfc"/>
<path d="M543 10l8 8M551 10l-8 8" stroke="#3d4349" stroke-width="1.300" fill="none"/>
<path d="M471.500 11.200c0-2 1.500-3 3.400-3s3.400 1 3.400 2.900c0 2.300-3.200 2.900-3.200 5.600" stroke="#fcfcfc" stroke-width="1.200" fill="none"/><rect x="474.400" y="19" width="1.400" height="1.500" fill="#fcfcfc"/>
</svg>
<div id="ttext">Advanced Settings — System Settings Module</div>
<h1>Advanced Power Management Settings</h1>
<div class="lbl" style="left:14px;top:141px;letter-spacing:.14px">Pause media players when suspending:</div>
<div class="abs" style="left:263px;top:140px;width:16px;height:16px;border:1px solid #3daee9;border-radius:3px;background:#fcfcfc"><div class="abs" style="left:2px;top:2px;width:10px;height:10px;background:#3daee9"></div></div>
<div class="lbl" style="left:285.500px;top:141px;letter-spacing:-.15px">Enabled</div>
<div class="btn" style="left:262px;top:166px;width:186px">
<svg style="left:6px;top:7px" width="16" height="16" viewBox="0 0 16 16"><circle cx="8" cy="8" r="7" fill="#fbae2c"/><path d="M7.400 4h1.200v5.500H7.400zM7.400 10.600h1.200v1.300H7.400z" fill="#fcc766"/></svg>
<span style="left:26.500px;letter-spacing:.2px">Configure Notifications...</span></div>

<div class="btn def" style="left:15px;top:206px;width:82px">
<svg style="left:16px" width="16" height="16" viewBox="0 0 16 16"><g fill="none" stroke="#fff"><circle cx="7" cy="8" r="5.500" stroke-width="1"/><circle cx="7" cy="8" r="2.300" stroke-width="1"/><circle cx="7" cy="8" r="3.900" stroke-width="3.200" stroke-dasharray="3.400 2.726" stroke-dashoffset="-1.360"/><path d="M1.500 2.500l1.300 1.300M12.500 2.500l-1.300 1.300M1.500 13.500l1.300-1.300M12.500 13.500l-1.300-1.300" stroke-width="1.300"/></g></svg>
<span style="left:36px">Help</span></div>
<div class="btn dis" style="left:105px;top:206px;width:82px">
<svg style="left:14px" width="16" height="16" viewBox="0 0 16 16"><path d="M5.800 2.200L2.100 5.350L5.800 8.700M2.300 5.350H7.500A4.100 4.100 0 1 1 6.200 13.400" fill="none" stroke="#919395" stroke-width="1.100"/></svg>
<span style="left:33px;letter-spacing:-.3px">Reset</span></div>
<div class="btn dis" style="left:195px;top:206px;width:85px">
<svg style="left:7px" width="16" height="16" viewBox="0 0 16 16"><path d="M1.500 2.500h8v7.500l-3.500 3.500h-4.500z" fill="none" stroke="#77797b" stroke-width="1"/><path d="M6 13.500v-3.500h3.500z" fill="#77797b"/><path d="M13 7.200l-1.900 1.900l1.900 1.900z" fill="#8a8c8e"/></svg>
<span style="left:26px">Defaults</span></div>
<div class="btn" style="left:288px;top:206px;width:82px">
<svg style="left:21px" width="16" height="16" viewBox="0 0 16 16"><path d="M1.200 8.300L4.500 11.700L12.700 3.800" fill="none" stroke="#232627" stroke-width="1.050"/></svg>
<span style="left:41.500px;letter-spacing:-1px">OK</span></div>
<div class="btn dis" style="left:378px;top:206px;width:82px">
<svg style="left:13px" width="16" height="16" viewBox="0 0 16 16"><path d="M1.400 8.300L4.700 11.700L12.900 3.800" fill="none" stroke="#a5a7a8" stroke-width="1.050"/></svg>
<span style="left:33.500px">Apply</span></div>
<div class="btn" style="left:468px;top:206px;width:82px">
<svg style="left:10px" width="16" height="16" viewBox="0 0 16 16"><circle cx="7" cy="7.900" r="5.500" fill="none" stroke="#232627" stroke-width="1.050"/><path d="M3.500 4.300l7 7" stroke="#232627" stroke-width="1.050"/></svg>
<span style="left:30px;letter-spacing:-.25px">Cancel</span></div>
</div>

<!-- panel -->
<div id="panel">
<svg class="abs" style="left:0;top:-1px" width="1024" height="36" viewBox="0 0 1024 36">
<!-- launcher --><defs><clipPath id="lc"><circle cx="18.050" cy="17.800" r="15.400"/></clipPath></defs>
<circle cx="18.050" cy="17.800" r="15" fill="none" stroke="#232627" stroke-width="1.800"/>
<path d="M11.400 7.700C16 7.600 22 9 26 13C27.800 15 28.700 17.500 28.700 19.500L28.700 22.300C26 24.500 21 26.300 16 26.300C12.500 26.300 9.500 26.800 7 27.800L0 27.800L0 6.500L7.600 8L10.900 10z" fill="#232627" clip-path="url(#lc)"/>
<path d="M12.600 17.600C15.500 20.300 21 22.600 28.700 22C22 24.400 15.500 22.400 12.600 17.600z" fill="#d9dddf"/>
<circle cx="21.800" cy="15.600" r="4.400" fill="#d9dddf"/><circle cx="21.800" cy="15.600" r="3.100" fill="#232627"/><circle cx="22" cy="15.100" r="1.200" fill="#d9dddf"/>
<!-- pager -->
<rect x="38" y="2" width="20" height="15" fill="#77bee8"/><rect x="42.500" y="6.500" width="10" height="4" fill="#4b8cb8" stroke="#3f7fae" stroke-width="1"/>
<rect x="38" y="18" width="20" height="15" fill="#c6cbcc"/>
<!-- task -->
<rect x="64" y="2" width="257" height="3" fill="#5db5e8"/>
<path d="M72 13h16M72 18h16M72 23h16" stroke="#18191a" stroke-width="2"/>
<!-- tray -->
<circle cx="814" cy="18" r="7.500" fill="none" stroke="#232627" stroke-width="1"/>
<circle cx="840" cy="18" r="7.500" fill="none" stroke="#232627" stroke-width="1"/>
<path d="M840 13.300l3.800 3.600h-1.900v4.800h-3.800v-4.800h-1.900z" fill="#232627"/>
<circle cx="845" cy="23" r="3" fill="#3daee9"/>
<g fill="none" stroke="#232627" stroke-width="1"><path d="M862.500 10.600H873.300V22"/><rect x="858.500" y="10.600" width="4" height="5.400"/><path d="M858.500 17.400v5.400M861 16v7.300q0 1.700 2 1.700"/></g>
<path d="M862.300 21.500h11.500v1.400h-11.500zM864.200 22.800h4.600v2.400h-4.600zM862.500 25h7.500v.900h-7.500z" fill="#232627"/><rect x="860" y="12" width="1" height="2.400" fill="#232627"/>
<path d="M884 15h2.500v6h-2.500zM888 15l5-5v16l-5-5z" fill="#232627"/><rect x="894" y="17" width="6" height="2" fill="#da4453"/>
<path d="M912 21.500l6-6l6 6z" fill="#232627"/>
<path d="M1001 14h12M1001 18h12M1001 22h12" stroke="#8a8d8f" stroke-width="1.800"/>
</svg>
<div class="abs" style="left:806px;top:9px;width:16px;text-align:center;font-size:11px;line-height:16px;color:#3c3f41">1</div>
<div class="lbl" style="left:97px;top:10px;color:#232627;letter-spacing:-.08px">Advanced Settings — System Setti…</div>
<div class="abs" style="left:933px;top:5px;font-size:24px;line-height:28px;color:#232627;white-space:nowrap;letter-spacing:-.3px">04:54</div>
</div>

<!-- cursor -->
<svg class="abs" style="left:0;top:0" width="20" height="32" viewBox="0 0 20 32"><path d="M0.500 5.200l12 12.200l-3.300 2.700v4.800l-1.500 .8l-3-2.800h-4.200z" fill="#4d4d4d" stroke="#fff" stroke-width="1.100" stroke-linejoin="round"/></svg>
</body>
</html>
